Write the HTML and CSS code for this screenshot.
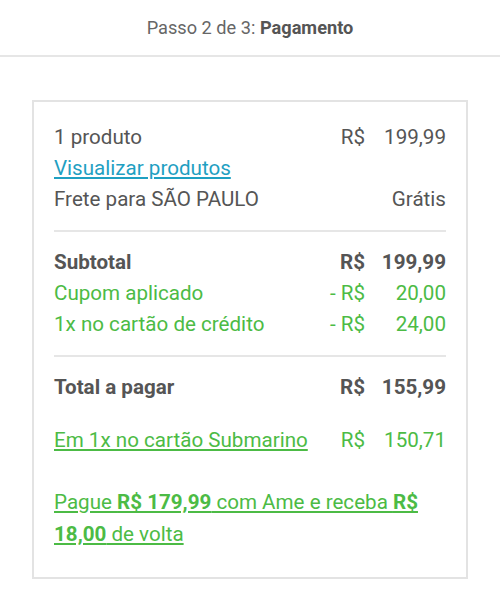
FILE: index.html
```html
<!DOCTYPE html>
<html>

<head>
    <title>Pagamento</title>
    <link rel="stylesheet" href="styles.css">
</head>

<body>
    <div class="step-header">
        Passo 2 de 3: <b>Pagamento</b>
    </div>

    <div class="summary">
        <div class="row">
            <span>1 produto</span>
            <span class="price"><span class="cur">R$</span><span class="val">199,99</span></span>
        </div>
        <div class="row">
            <a class="link-blue" href="#">Visualizar produtos</a>
        </div>
        <div class="row">
            <span>Frete para SÃO PAULO</span>
            <span>Grátis</span>
        </div>

        <hr class="divider">

        <div class="row strong">
            <span>Subtotal</span>
            <span class="price"><span class="cur">R$</span><span class="val">199,99</span></span>
        </div>
        <div class="row green">
            <span>Cupom aplicado</span>
            <span class="price"><span class="cur">- R$</span><span class="val">20,00</span></span>
        </div>
        <div class="row green">
            <span>1x no cartão de crédito</span>
            <span class="price"><span class="cur">- R$</span><span class="val">24,00</span></span>
        </div>

        <hr class="divider">

        <div class="row strong">
            <span>Total a pagar</span>
            <span class="price"><span class="cur">R$</span><span class="val">155,99</span></span>
        </div>

        <div class="row green card-offer">
            <a class="link-green" href="#">Em 1x no cartão Submarino</a>
            <span class="price"><span class="cur">R$</span><span class="val">150,71</span></span>
        </div>

        <p class="ame">
            <a class="link-green" href="#">Pague <b>R$ 179,99</b> com Ame e receba <b>R$ 18,00</b> de volta</a>
        </p>
    </div>
</body>

</html>
```

FILE: styles.css
```css
body {
    font-family: Roboto, "Noto Sans", sans-serif;
    background-color: #fff;
    color: #555;
    margin: 0;
}

.step-header {
    height: 55px;
    line-height: 55px;
    text-align: center;
    font-size: 18.2px;
    color: #666;
    border-bottom: 2px solid #e6e6e6;
}

.step-header b {
    color: #555;
}

.summary {
    margin: 43px 32px 0;
    padding: 20px 20px 27px;
    border: 2px solid #e3e3e3;
    font-size: 20.6px;
    line-height: 31px;
}

.row {
    display: flex;
    justify-content: space-between;
}

.price {
    display: flex;
}

.val {
    width: 81px;
    text-align: right;
}

.strong {
    font-weight: bold;
}

.green {
    color: #4cbb45;
}

.divider {
    border: none;
    border-top: 2px solid #e6e6e6;
    margin: 15px 0;
}

.link-blue {
    color: #1fa0c2;
}

.link-green {
    color: #4cbb45;
}

.card-offer {
    margin-top: 22px;
}

.ame {
    margin: 30px 0 0;
    line-height: 32px;
}
```
